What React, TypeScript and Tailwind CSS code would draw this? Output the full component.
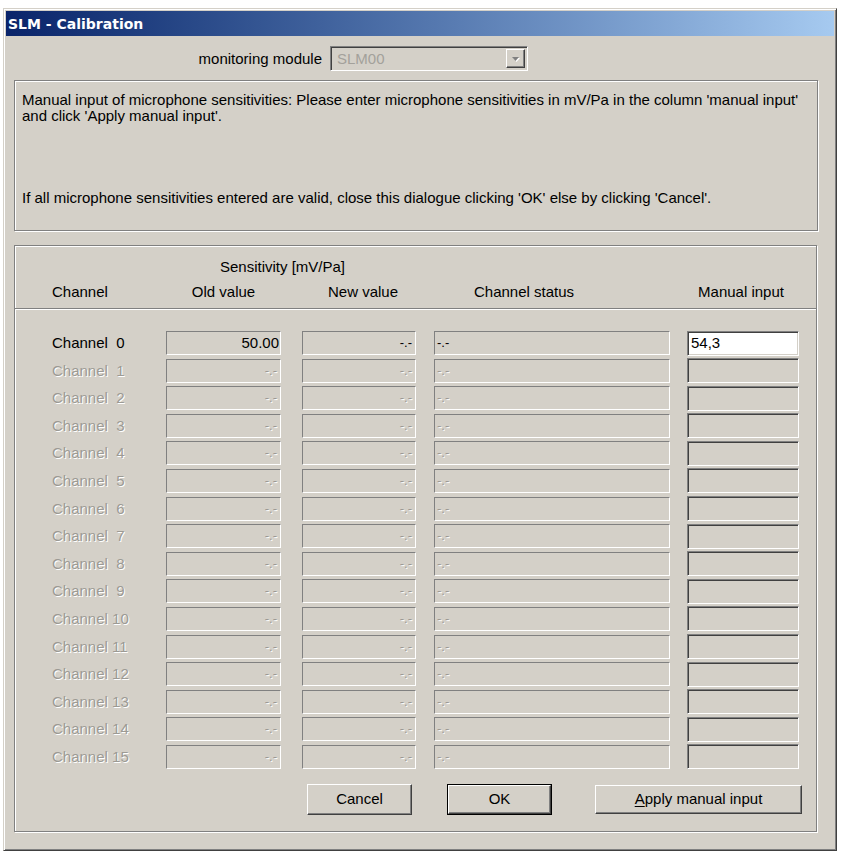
import React from "react";

// classic Win9x/2000 look
const DIS = "text-[#9c9a94] [text-shadow:1px_1px_0_#ffffff]";
const SUNKEN1 = "border border-t-[#808080] border-l-[#808080] border-r-white border-b-white";
const SUNKEN2 =
  "border border-t-[#808080] border-l-[#808080] border-r-white border-b-white shadow-[inset_1px_1px_0_#404040,inset_-1px_-1px_0_#d4d0c8]";
const RAISED =
  "border border-t-white border-l-white border-r-[#404040] border-b-[#404040] shadow-[inset_-1px_-1px_0_#808080]";
const ETCHED = "border border-[#808080] shadow-[inset_1px_1px_0_#ffffff,1px_1px_0_#ffffff]";

const channels = Array.from({ length: 16 }, (_, i) => i);

function Row({ n }: { n: number }) {
  const on = n === 0;
  const txt = on ? "text-black" : DIS;
  return (
    <div className="flex h-[24px] items-center pl-[37px]">
      <div className={`w-[114px] whitespace-pre leading-[16px] ${txt}`}>
        {n < 10 ? `Channel  ${n}` : `Channel ${n}`}
      </div>
      <div className={`w-[115px] h-[24px] ${SUNKEN1} flex items-center justify-end pr-[1px] leading-[16px]`}>
        {on ? <span className="text-black">50.00</span> : <span className={`${DIS} pr-[2px] text-[13px]`}>-.-</span>}
      </div>
      <div className={`ml-[21px] w-[114px] h-[24px] ${SUNKEN1} flex items-center justify-end pr-[3px] leading-[16px]`}>
        <span className={`${on ? "text-black" : DIS} text-[13px]`}>-.-</span>
      </div>
      <div className={`ml-[18px] w-[236px] h-[24px] ${SUNKEN1} flex items-center pl-[2px] leading-[16px]`}>
        <span className={`${on ? "text-black" : DIS} text-[13px]`}>-.-</span>
      </div>
      <div
        className={`ml-[17px] w-[112px] h-[25px] ${SUNKEN2} ${on ? "bg-white" : "bg-[#d4d0c8]"} flex items-center pl-[3px] leading-[16px] text-black`}
      >
        {on ? "54,3" : ""}
      </div>
    </div>
  );
}

export default function App() {
  return (
    <div className="min-h-[856px] bg-white pt-[8px] pl-[3px] font-['Liberation_Sans',Arial,sans-serif] text-[15px] text-black">
      <div
        className={`w-[834px] h-[843px] bg-[#d4d0c8] p-[2px] border border-t-[#d4d0c8] border-l-[#d4d0c8] border-r-[#404040] border-b-[#404040] shadow-[inset_1px_1px_0_#ffffff,inset_-1px_-1px_0_#808080]`}
      >
        {/* title bar */}
        <div className="h-[25px] bg-linear-to-r from-[#0a246a] to-[#a6caf0] flex items-center pl-[2px]">
          <span className="font-['DejaVu_Sans',Verdana,sans-serif] font-bold text-[14px] text-white leading-none">
            SLM - Calibration
          </span>
        </div>

        {/* module select */}
        <div className="mt-[10px] flex items-center h-[25px]">
          <div className="w-[316px] text-right leading-[16px]">monitoring module</div>
          <div className={`ml-[8px] w-[198px] h-[25px] ${SUNKEN2} flex items-center justify-between pl-[6px] pr-[2px]`}>
            <span className="text-[#a3a19b] leading-[16px]">SLM00</span>
            <div className={`w-[19px] h-[19px] ${RAISED} flex items-center justify-center`}>
              <svg width="9" height="6" viewBox="0 0 9 6">
                <path d="M1 1h7L4.5 5z" fill="#ffffff" transform="translate(1 1)" />
                <path d="M1 1h7L4.5 5z" fill="#808080" />
              </svg>
            </div>
          </div>
        </div>

        {/* info group */}
        <div className={`mt-[9px] ml-[8px] w-[804px] h-[151px] ${ETCHED} pl-[7px] pt-[11px] leading-[16px]`}>
          <div className="whitespace-nowrap">
            Manual input of microphone sensitivities: Please enter microphone sensitivities in mV/Pa in the column
            'manual input'
          </div>
          <div className="whitespace-nowrap">and click 'Apply manual input'.</div>
          <div className="mt-[66px] whitespace-nowrap">
            If all microphone sensitivities entered are valid, close this dialogue clicking 'OK' else by clicking
            'Cancel'.
          </div>
        </div>

        {/* channel table group */}
        <div className={`mt-[14px] ml-[8px] w-[803px] h-[587px] ${ETCHED} leading-[16px]`}>
          <div className="pt-[13px] flex pl-[37px]">
            <div className="w-[114px]" />
            <div className="w-[250px] text-center pr-[17px]">Sensitivity [mV/Pa]</div>
          </div>
          <div className="mt-[9px] flex pl-[37px]">
            <div className="w-[114px]">Channel</div>
            <div className="w-[115px] text-center">Old value</div>
            <div className="ml-[21px] w-[114px] text-center pl-[8px]">New value</div>
            <div className="ml-[18px] w-[236px] text-center pr-[56px]">Channel status</div>
            <div className="ml-[17px] w-[112px] text-center pr-[4px]">Manual input</div>
          </div>
          <div className="mt-[8px] h-[2px] border-t border-t-[#808080] border-b border-b-white" />

          <div className="mt-[21px] flex flex-col gap-[3.6px]">
            {channels.map((n) => (
              <Row key={n} n={n} />
            ))}
          </div>

          <div className="mt-[15px] flex items-start pl-[292px]">
            <button className={`w-[105px] h-[31px] ${RAISED} bg-[#d4d0c8] leading-[16px]`}>Cancel</button>
            <div className="ml-[35px] w-[105px] h-[31px] border border-black">
              <button className={`w-full h-full ${RAISED} bg-[#d4d0c8] leading-[16px]`}>OK</button>
            </div>
            <button className={`ml-[43px] mt-[1px] w-[207px] h-[29px] ${RAISED} bg-[#d4d0c8] leading-[16px]`}>
              <span className="underline underline-offset-2">A</span>pply manual input
            </button>
          </div>
        </div>
      </div>
    </div>
  );
}
